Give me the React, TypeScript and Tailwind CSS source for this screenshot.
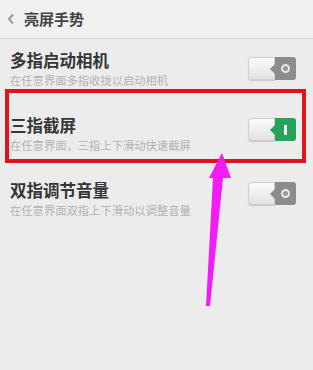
import React from "react";

const font = { fontFamily: '"Noto Sans CJK SC", "Noto Sans", sans-serif' };

function Toggle({ on, offset }: { on?: boolean; offset: string }) {
  return (
    <div className={`flex shrink-0 ${offset}`}>
      <div className="w-[27px] h-[23px] rounded-l-[3px] bg-gradient-to-b from-[#fbfbfb] to-[#e2e2e2] border border-[#cfcfcf] shadow-[0_1px_1px_rgba(0,0,0,0.15)]" />
      <div
        className={`relative w-[21px] h-[23px] rounded-r-[3px] flex items-center justify-center ${
          on ? "bg-[#25a35a]" : "bg-[#8c8c8c]"
        }`}
      >
        <div
          className={`absolute left-[-5px] top-[7px] w-0 h-0 border-y-[5px] border-y-transparent border-r-[5px] ${
            on ? "border-r-[#25a35a]" : "border-r-[#8c8c8c]"
          }`}
        />
        {on ? (
          <div className="w-[3px] h-[10px] bg-white" />
        ) : (
          <div className="w-[9px] h-[9px] rounded-full border-2 border-[#e8e8e8] bg-[#9a9a9a]" />
        )}
      </div>
    </div>
  );
}

function Row({
  title,
  sub,
  on,
  offset,
}: {
  title: string;
  sub: string;
  on?: boolean;
  offset: string;
}) {
  return (
    <div className="flex items-start justify-between pl-[10px] pr-[17px] pt-[11px] h-[65px]">
      <div className="flex flex-col">
        <div className="text-[16.5px] leading-[20px] text-[#363636] font-bold">{title}</div>
        <div className="mt-[3px] text-[11.3px] leading-[14px] text-[#b3b3b3]">{sub}</div>
      </div>
      <Toggle on={on} offset={offset} />
    </div>
  );
}

export default function App() {
  return (
    <div className="relative w-[313px] h-[370px] overflow-hidden bg-[#ececec]" style={font}>
      <div className="h-[39px] flex items-center pl-[7px] gap-[9px] border-b border-[#d6d6d6] bg-[#f0f0f0]">
        <svg width="8" height="12" viewBox="0 0 8 12">
          <path d="M6 1.5 L2 6 L6 10.5" fill="none" stroke="#9a9a9a" strokeWidth="2" />
        </svg>
        <div className="text-[15px] leading-[20px] font-bold text-[#444]">亮屏手势</div>
      </div>
      <Row title="多指启动相机" sub="在任意界面多指收拢以启动相机" offset="mt-[7px]" />
      <Row title="三指截屏" sub="在任意界面，三指上下滑动快速截屏" on offset="mt-[3px]" />
      <Row title="双指调节音量" sub="在任意界面双指上下滑动以调整音量" offset="mt-[2px]" />

      <div className="absolute left-[5px] top-[89px] w-[301px] h-[74px] border-4 border-[#e3121b]" />

      <svg className="absolute left-0 top-0" width="313" height="370" viewBox="0 0 313 370">
        <polygon
          points="222,153 231,178 223,178 210,306 206,306 213,178 209,178"
          fill="#f41cf4"
        />
      </svg>
    </div>
  );
}
